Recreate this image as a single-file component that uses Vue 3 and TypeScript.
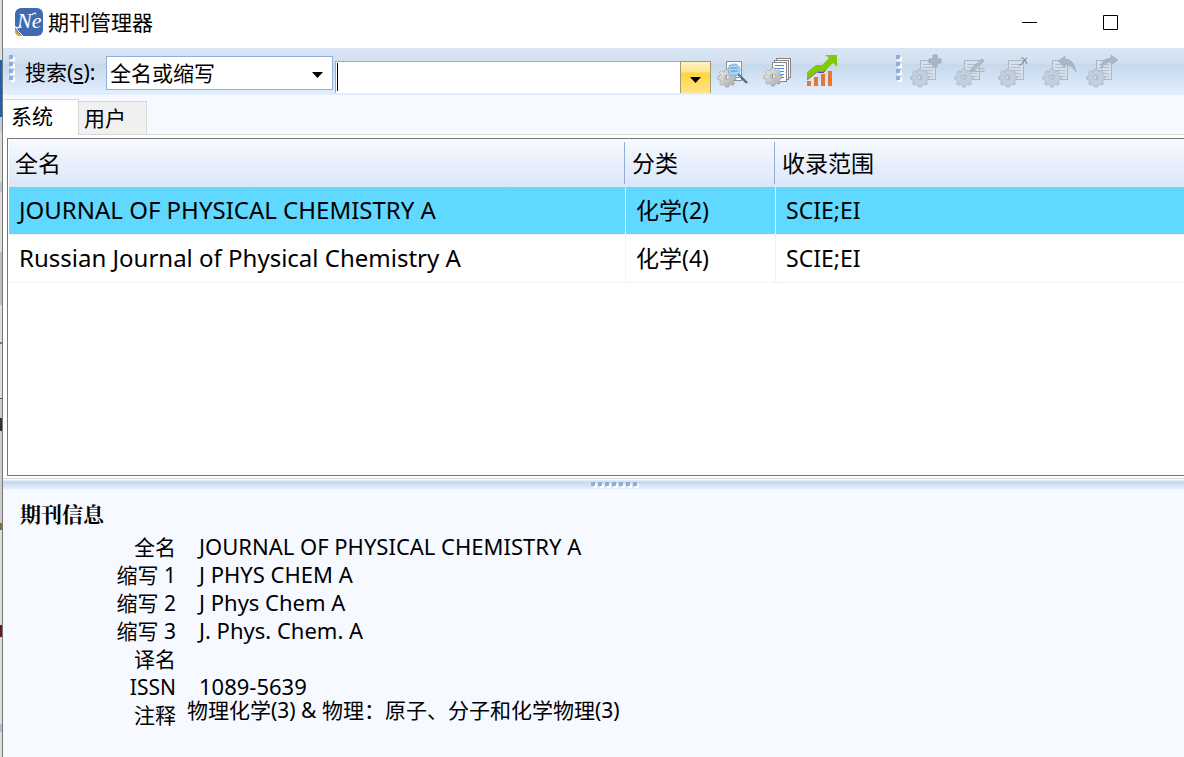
<script setup lang="ts">
import { ref } from 'vue'

interface Journal {
  name: string
  category: string
  coverage: string
}

const journals: Journal[] = [
  { name: 'JOURNAL OF PHYSICAL CHEMISTRY A', category: '化学(2)', coverage: 'SCIE;EI' },
  { name: 'Russian Journal of Physical Chemistry A', category: '化学(4)', coverage: 'SCIE;EI' },
]

const details = [
  { label: '全名', value: 'JOURNAL OF PHYSICAL CHEMISTRY A' },
  { label: '缩写 1', value: 'J PHYS CHEM A' },
  { label: '缩写 2', value: 'J Phys Chem A' },
  { label: '缩写 3', value: 'J. Phys. Chem. A' },
  { label: '译名', value: '' },
  { label: 'ISSN', value: '1089-5639' },
]

const editActions = [
  { id: 'add', label: '添加' },
  { id: 'edit', label: '编辑' },
  { id: 'delete', label: '删除' },
  { id: 'undo', label: '导入' },
  { id: 'redo', label: '导出' },
]

const selected = ref(0)
const tab = ref('system')
const query = ref('')
const field = ref('name')
</script>

<template>
  <div class="desktop">
    <div class="behind" aria-hidden="true"></div>
    <main class="window">
      <svg class="defs" width="0" height="0" aria-hidden="true">
        <defs>
          <path
            id="gear"
            fill-rule="evenodd"
            d="M-1.5 -8h3l.6 2.2 1.4 .6 2.1-1.2 2 2-1.2 2.1 .6 1.3 2 .6v2.8l-2 .6-.6 1.4 1.2 2-2 2-2-1.1-1.5 .6-.6 2.1h-3l-.6-2.1-1.4-.6-2 1.1-2-2 1.1-2-.6-1.4-2.2-.6v-2.8l2.2-.6 .6-1.3-1.1-2.1 2-2 2 1.2 1.4-.6zM-2 -1.5v3.5h4v-3.5z"
          />
          <linearGradient id="metal" x1="0" y1="0" x2="1" y2="1">
            <stop offset="0" stop-color="#eeeeee" />
            <stop offset="1" stop-color="#a4a6a9" />
          </linearGradient>
        </defs>
      </svg>

      <header class="titlebar">
        <svg class="logo" viewBox="0 0 28 28" aria-hidden="true">
          <rect width="28" height="28" rx="6" fill="#416bb0" />
          <path d="M0 19q1 6 8 9H5q-5 0-5-5z" fill="#f4a024" />
          <path d="M0 18q2 5 8 10" fill="none" stroke="#ffffff" stroke-width="1" />
          <text x="2" y="20">Ne</text>
          <path d="M6 17q-2 4-5 2M17 7q2-3 4-1" fill="none" stroke="#ffffff" stroke-width="1.200" />
        </svg>
        <h1>期刊管理器</h1>
        <div class="caption">
          <button type="button" aria-label="最小化">
            <svg viewBox="0 0 15 15"><path d="M0 7.5h15" /></svg>
          </button>
          <button type="button" aria-label="最大化">
            <svg viewBox="0 0 15 15"><path d="M.5 .5h14v14H.5z" /></svg>
          </button>
        </div>
      </header>

      <div class="toolbar">
        <span class="grip"><i v-for="n in 4" :key="n"></i></span>
        <label class="search-label" for="field">搜索(<u>s</u>):</label>
        <div class="field">
          <select id="field" v-model="field">
            <option value="name">全名或缩写</option>
          </select>
          <svg class="field-arrow" viewBox="0 0 11 6" aria-hidden="true"><path d="M0 0h11L5.500 6z" /></svg>
        </div>
        <div class="query">
          <input v-model="query" type="text" aria-label="搜索内容" />
          <span class="caret"></span>
          <button type="button" aria-label="搜索历史">
            <svg viewBox="0 0 11 6" width="11" height="6"><path d="M0 0h11L5.500 6z" /></svg>
          </button>
        </div>
        <div class="tools">
          <button type="button" aria-label="查找">
            <svg viewBox="0 0 32 36">
              <rect x="7.500" y="7.500" width="15" height="19" fill="#fbfbfb" stroke="#8f8f8f" />
              <path d="M10 11.500h9M10 14.500h9M10 17.500h9M13 20.500h7M15 23.500h5" stroke="#4f9be8" />
              <use href="#gear" x="8" y="23" fill="url(#metal)" stroke="#999999" stroke-width=".6" />
              <circle cx="15" cy="16" r="6" fill="#a4d4f5" fill-opacity=".85" stroke="#72b1df" />
              <path d="M11.500 14h7M11.500 17h7" stroke="#4c91cd" />
              <path d="M20 21l8 8" stroke="#5a6b77" stroke-width="2.400" />
              <path d="M19 20l3 3" stroke="#3c8dc7" stroke-width="2.400" />
            </svg>
          </button>
          <button type="button" aria-label="列表">
            <svg viewBox="0 0 32 36">
              <g fill="#fbfbfb" stroke="#858585">
                <rect x="13.500" y="4.500" width="14" height="19" />
                <rect x="11.500" y="6.500" width="14" height="19" />
                <rect x="9.500" y="8.500" width="14" height="19" />
              </g>
              <path d="M12 11.500h9M12 14.500h9M12 17.500h9M14 20.500h7M15 23.500h6" stroke="#3f91ee" />
              <use href="#gear" x="10" y="22" fill="url(#metal)" stroke="#999999" stroke-width=".6" />
            </svg>
          </button>
          <button type="button" aria-label="统计">
            <svg viewBox="0 0 32 36">
              <path d="M0 18L9 11h6L22 4 18 1h12v12l-4-4-9 9h-7L0 26z" fill="#83c909" />
              <path d="M0 26l10-8h7l2-2" fill="none" stroke="#7a7568" />
              <path d="M11 18.500h6" stroke="#5548cf" />
              <path d="M0 27h4v5H0zM7 23h4v9H7zM14 20h4v12h-4zM21 17h4v15h-4z" fill="#e27932" />
            </svg>
          </button>
        </div>
        <span class="grip second"><i v-for="n in 4" :key="n"></i></span>
        <div class="edit-tools">
          <button v-for="action in editActions" :key="action.id" type="button" disabled :aria-label="action.label">
            <svg viewBox="0 0 32 36">
              <rect x="8.500" y="6.500" width="15" height="19" fill="#d5e0ec" stroke="#aab7c5" />
              <path d="M11 10.500h10M11 13.500h10M11 16.500h10M13 19.500h8M15 22.500h6" stroke="#b0becd" />
              <use href="#gear" x="8" y="23" fill="#c2cfdd" stroke="#a8b6c5" stroke-width=".8" />
              <path v-if="action.id === 'add'" d="M21 1h4v4h4v4h-4v4h-4V9h-4V5h4z" fill="#a9b6c3" stroke="#9daab8" />
              <g v-else-if="action.id === 'edit'">
                <path d="M14 18l2-4L26 5l2 2-10 9z" fill="#b0bfcd" stroke="#9fafbe" />
                <path d="M14 17.500h14v-3h-7" fill="none" stroke="#abbac9" />
              </g>
              <path
                v-else-if="action.id === 'delete'"
                d="M21 4q3-1 6 6M27 4q-2 1-5 6-2 1-3 1"
                fill="none"
                stroke="#8593a1"
                stroke-width="1.300"
              />
              <path
                v-else-if="action.id === 'undo'"
                d="M14 7l7-5v3q9 0 11 13-5-8-11-7v3z"
                fill="#a9b6c3"
                stroke="#9facba"
                stroke-width=".6"
              />
              <path v-else d="M13 15Q12 5 23 4V1l7 5-7 5V8q-6 0-10 7z" fill="#a9b6c3" stroke="#9facba" stroke-width=".6" />
            </svg>
          </button>
        </div>
      </div>

      <nav class="tabs" role="tablist">
        <button type="button" role="tab" :class="{ active: tab === 'system' }" :aria-selected="tab === 'system'" @click="tab = 'system'">系统</button>
        <button type="button" role="tab" :class="{ active: tab === 'user' }" :aria-selected="tab === 'user'" @click="tab = 'user'">用户</button>
        <span class="tab-rest"></span>
      </nav>

      <section class="list">
        <div class="frame">
          <table>
            <colgroup>
              <col class="col-name" />
              <col class="col-category" />
              <col />
            </colgroup>
            <thead>
              <tr>
                <th scope="col"><span>全名</span></th>
                <th scope="col"><span>分类</span></th>
                <th scope="col"><span>收录范围</span></th>
              </tr>
            </thead>
            <tbody>
              <tr v-for="(journal, index) in journals" :key="journal.name" :class="{ selected: selected === index }" @click="selected = index">
                <td class="name">{{ journal.name }}</td>
                <td>{{ journal.category }}</td>
                <td>{{ journal.coverage }}</td>
              </tr>
            </tbody>
          </table>
        </div>
      </section>

      <div class="splitter" role="separator" aria-orientation="horizontal">
        <i v-for="n in 7" :key="n"></i>
      </div>

      <section class="info">
        <h2>期刊信息</h2>
        <dl>
          <template v-for="item in details" :key="item.label">
            <dt>{{ item.label }}</dt>
            <dd>{{ item.value }}</dd>
          </template>
          <dt>注释</dt>
          <dd class="note">物理化学(3) &amp; 物理：原子、分子和化学物理(3)</dd>
        </dl>
      </section>
    </main>
  </div>
</template>

<style>
body {
  margin: 0;
}
</style>

<style scoped>
* {
  box-sizing: border-box;
}

button,
input,
select {
  padding: 0;
  border: 0;
  border-radius: 0;
  background: none;
  color: inherit;
  font: inherit;
}

.desktop {
  display: flex;
  min-height: 100vh;
  overflow: hidden;
  color: #000000;
  font-family: "Noto Sans", "Noto Sans CJK SC", sans-serif;
  font-size: 21px;
}

.behind {
  flex: none;
  width: 2px;
  background: linear-gradient(
    #dddddd 0 60px,
    #1763b2 60px 117px,
    #c2ccd6 117px 132px,
    #dddddd 132px 182px,
    #b9c5cc 182px 192px,
    #dddddd 192px 252px,
    #b5c1c7 252px 305px,
    #dddddd 305px 342px,
    #777777 342px 344px,
    #dddddd 344px 398px,
    #555555 398px 399px,
    #cccccc 399px 418px,
    #333333 418px 431px,
    #cccccc 431px 523px,
    #8c6b38 523px 530px,
    #dddddd 530px 625px,
    #641b25 625px 637px,
    #dddddd 637px 724px,
    #aabbd3 724px 732px,
    #dddddd 732px
  );
}

.window {
  display: flex;
  flex: 1;
  flex-direction: column;
  min-width: 0;
  border-left: 1px solid #777777;
  background: #f6f9ff;
}

.defs {
  display: block;
  flex: none;
  height: 0;
}

.titlebar {
  display: flex;
  align-items: center;
  height: 48px;
  padding: 0 66px 4px 12px;
  background: #ffffff;
}

.logo {
  flex: none;
  width: 28px;
  height: 28px;
}

.logo text {
  fill: #ffffff;
  font-family: "Liberation Serif", serif;
  font-size: 22px;
  font-style: italic;
}

h1 {
  margin: 0 auto 0 5px;
  font-size: 21px;
  font-weight: 400;
  line-height: 28px;
}

.caption {
  display: flex;
  gap: 66px;
}

.caption svg {
  display: block;
  width: 15px;
  height: 15px;
  fill: none;
  stroke: #000000;
}

.toolbar {
  display: flex;
  align-items: flex-start;
  height: 47px;
  padding-left: 6px;
  background: linear-gradient(#dae6f4, #d2dff0 15px, #c6d8ec 16px, #e3efff);
}

.grip {
  display: flex;
  flex: none;
  flex-direction: column;
  gap: 3px;
  width: 6px;
  margin-top: 7px;
}

.grip i,
.splitter i {
  width: 4px;
  height: 4px;
  background: #8faed9;
  box-shadow: 2px 2px 0 #ffffff;
}

.search-label {
  flex: none;
  width: 81px;
  margin-top: 10px;
  padding-left: 10px;
  line-height: 28px;
  white-space: nowrap;
}

.search-label u {
  text-decoration-thickness: 2px;
  text-underline-offset: 2px;
}

.field {
  position: relative;
  flex: none;
  width: 227px;
  height: 34px;
  margin: 8px 2px 0 10px;
}

.field select {
  width: 100%;
  height: 100%;
  padding: 0 24px 0 3px;
  border: 1px solid #8faed9;
  background: #ffffff;
  appearance: none;
}

.field-arrow {
  position: absolute;
  top: 16px;
  right: 10px;
  width: 11px;
  height: 6px;
  pointer-events: none;
}

.query {
  position: relative;
  display: flex;
  flex: none;
  width: 376px;
  height: 32px;
  margin-top: 13px;
}

.query input {
  flex: 1;
  min-width: 0;
  padding: 0 4px;
  border: solid #8faed9;
  border-width: 1px 0 0 1px;
  background: #ffffff;
}

.caret {
  position: absolute;
  top: 2px;
  left: 2px;
  width: 1px;
  height: 28px;
  background: #000000;
}

.query button {
  display: flex;
  align-items: center;
  justify-content: center;
  width: 31px;
  padding-top: 5px;
  border: solid #a89a6c;
  border-width: 1px 1px 0;
  background: linear-gradient(#fff3c4, #ffe68c 10px, #ffd53f 11px, #ffe487);
}

.tools,
.edit-tools {
  display: flex;
  flex: none;
  margin-top: 6px;
}

.tools {
  gap: 12px;
  margin-left: 8px;
}

.edit-tools {
  gap: 12px;
  margin-left: 10px;
}

.tools svg,
.edit-tools svg {
  display: block;
  overflow: visible;
  width: 32px;
  height: 36px;
  fill: none;
}

.second {
  margin-left: 57px;
}

.tabs {
  display: flex;
  align-items: flex-end;
  height: 40px;
}

.tabs button {
  width: 68px;
  height: 34px;
  padding: 0 0 2px 5px;
  border: solid #d9d9d9;
  border-width: 1px 1px 1px 0;
  background: #f0f0f0;
  text-align: left;
}

.tabs .active {
  width: 76px;
  height: 36px;
  padding: 0 0 5px 8px;
  border-bottom: 0;
  background: #ffffff;
}

.tab-rest {
  flex: 1;
  align-self: stretch;
  border-bottom: 1px solid #d9d9d9;
}

.list {
  display: flex;
  flex: 1;
  padding: 3px 0 2px 4px;
  background: #ffffff;
}

.frame {
  flex: 1;
  min-width: 0;
  padding-left: 1px;
  border: solid #777777;
  border-width: 1px 0 1px 1px;
}

table {
  width: 100%;
  border-collapse: separate;
  border-spacing: 0;
  table-layout: fixed;
  font-size: 23px;
  line-height: 32px;
}

.col-name {
  width: 617px;
}

.col-category {
  width: 150px;
}

th {
  height: 48px;
  padding: 3px 0;
  background: linear-gradient(#f7faff, #dbe6f8);
  font-weight: 400;
  text-align: left;
}

th span {
  display: block;
  margin-right: 1px;
  padding: 5px 6px;
}

th:not(:last-child) span {
  border-right: 1px solid #8faed9;
}

td {
  height: 48px;
  padding: 0 10px 2px;
  border-right: 1px dotted #e6e6e6;
  border-bottom: 1px dotted #e6e6e6;
  white-space: nowrap;
}

td:last-child {
  border-right: 0;
}

.name {
  font-size: 24px;
}

.selected td {
  background: #60d8ff;
  background-clip: padding-box;
}

.splitter {
  display: flex;
  gap: 3px;
  justify-content: center;
  height: 11px;
  padding-top: 3px;
  padding-left: 40px;
  border-top: 1px solid #d9d9d9;
  background: linear-gradient(#ffffff, #c6d8ec 3px, #e3efff);
}

.info {
  min-height: 268px;
  padding: 12px 0 20px;
}

h2 {
  margin: 0 0 4px 17px;
  font-family: "Liberation Serif", "Noto Serif CJK SC", "Noto Sans CJK SC", serif;
  font-size: 21px;
  font-weight: 700;
  line-height: 28px;
}

dl {
  display: grid;
  grid-template-columns: 173px 1fr;
  grid-auto-rows: 28px;
  margin: 0;
  line-height: 28px;
}

dt {
  text-align: right;
}

dd {
  margin: 0 0 0 23px;
  font-size: 22px;
  line-height: 26px;
  white-space: nowrap;
}

.note {
  margin-left: 11px;
  font-size: 21px;
  line-height: 18px;
}
</style>
